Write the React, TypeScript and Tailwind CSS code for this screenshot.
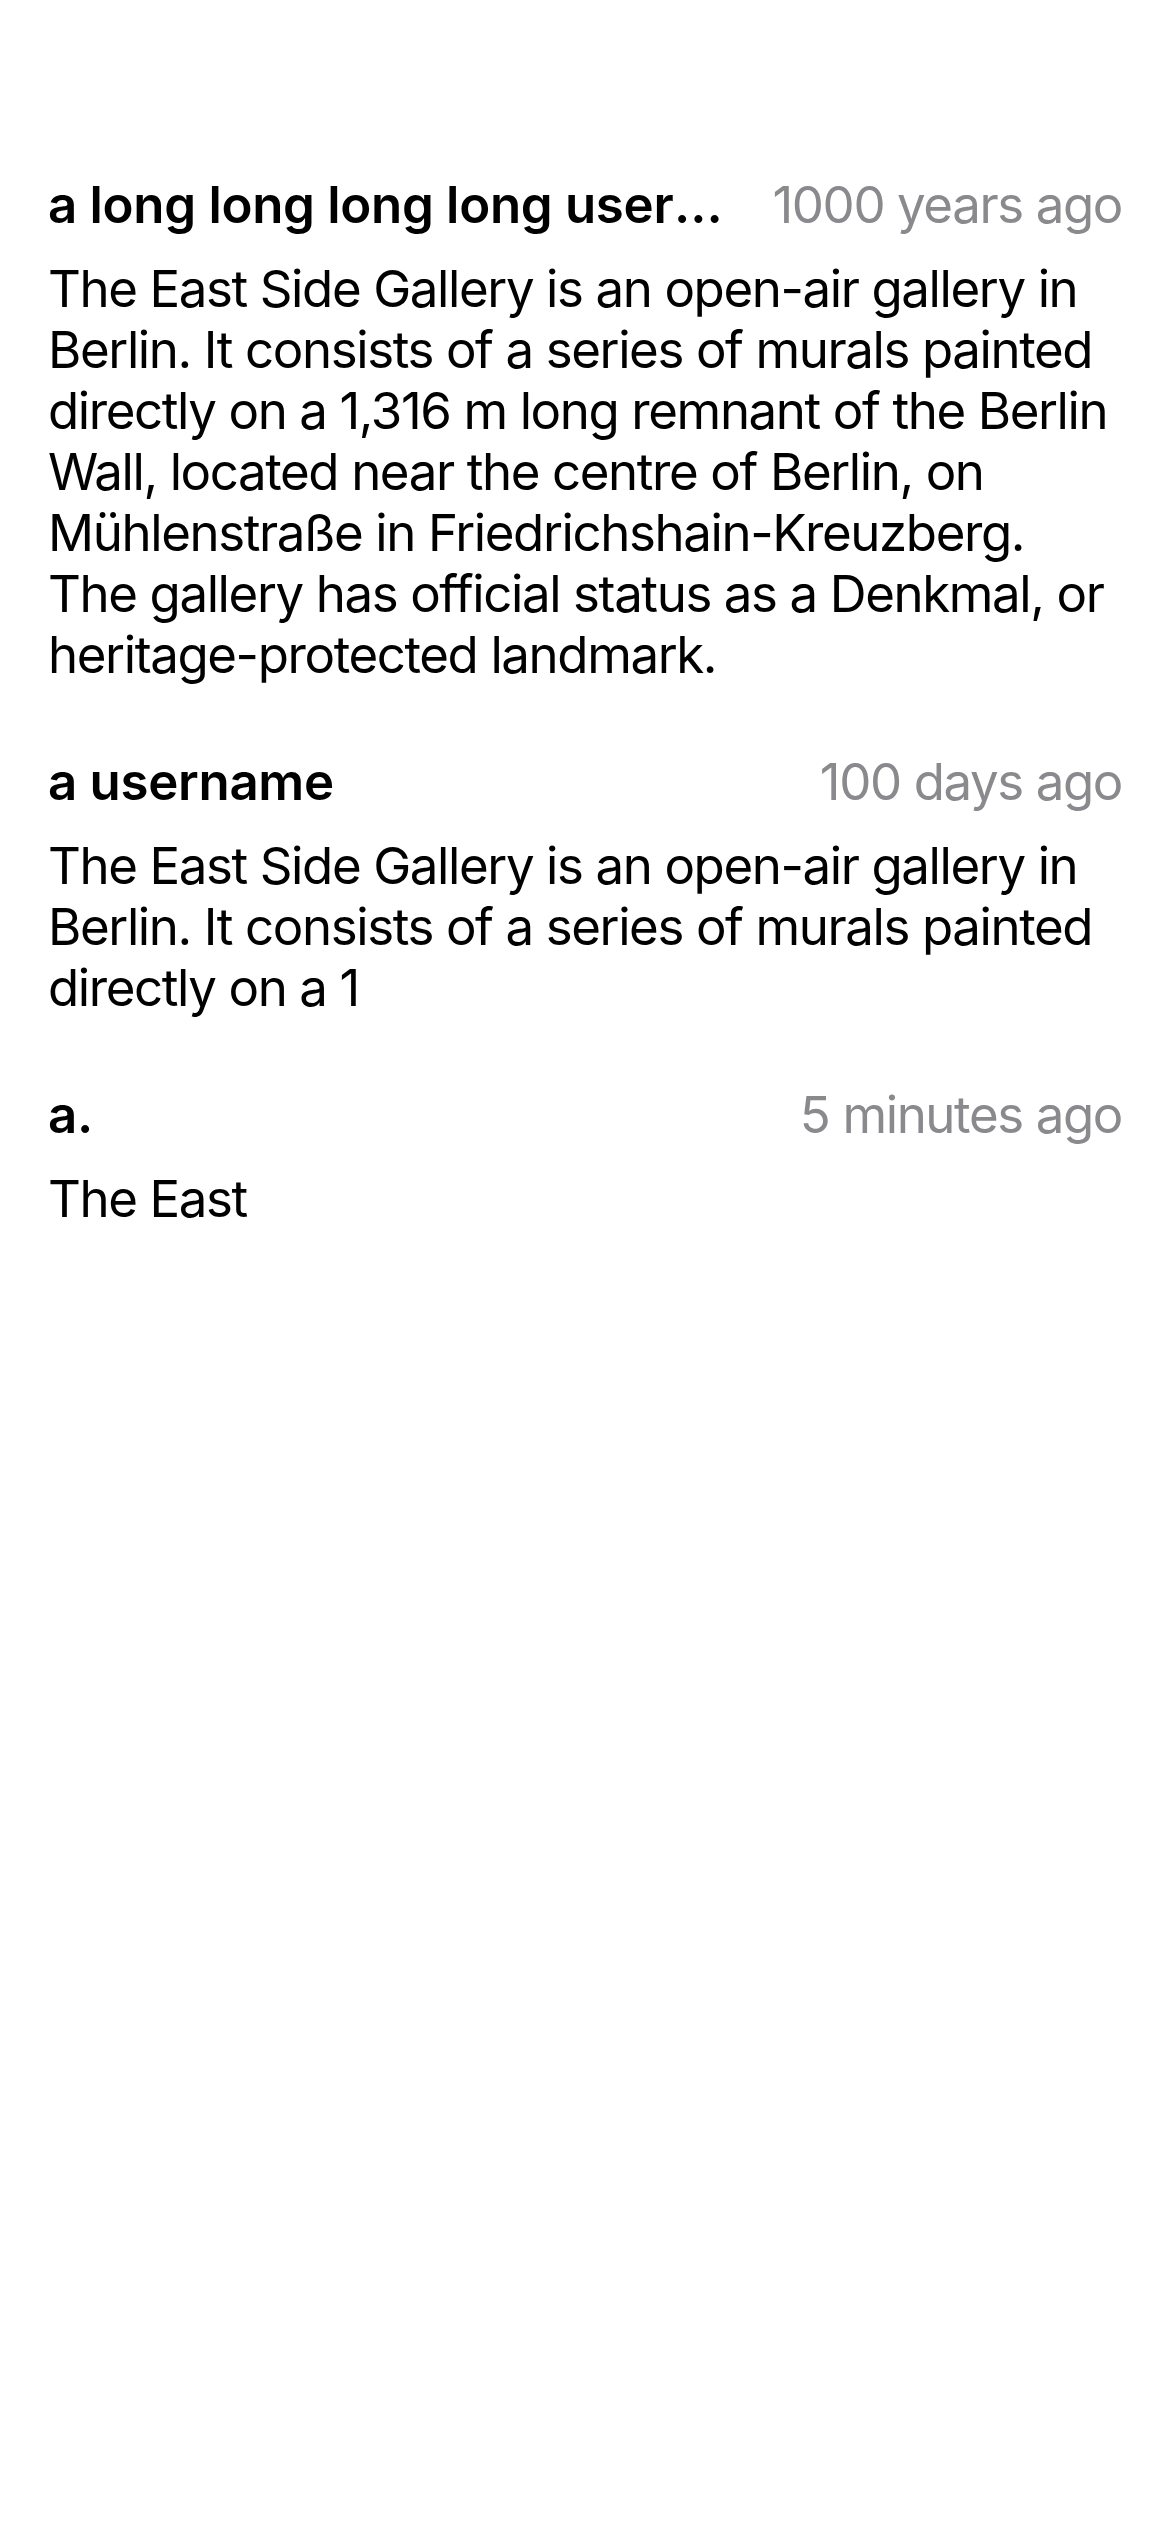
import React from "react";

const TEXT =
  "The East Side Gallery is an open-air gallery in Berlin. It consists of a series of murals painted directly on a 1,316 m long remnant of the Berlin Wall, located near the centre of Berlin, on Mühlenstraße in Friedrichshain-Kreuzberg. The gallery has official status as a Denkmal, or heritage-protected landmark.";

const comments = [
  { user: "a long long long long username here", time: "1000 years ago", body: TEXT },
  { user: "a username", time: "100 days ago", body: "The East Side Gallery is an open-air gallery in Berlin. It consists of a series of murals painted directly on a 1" },
  { user: "a.", time: "5 minutes ago", body: "The East" },
];

const Comment = ({ user, time, body }: { user: string; time: string; body: string }) => (
  <div className="flex flex-col gap-[23px]">
    <div className="flex items-center gap-[40px] leading-[61px]">
      <span className="flex-1 min-w-0 truncate font-semibold tracking-[-0.3px] text-black">{user}</span>
      <span className="shrink-0 text-[#8a8a8e]">{time}</span>
    </div>
    <p className="leading-[61px] text-black">{body}</p>
  </div>
);

export default function App() {
  return (
    <div
      className="min-h-screen bg-white px-12 pt-[174px] flex flex-col gap-[66px] text-[51px] tracking-[-1.4px]"
      style={{ fontFamily: "Inter, 'Noto Sans', sans-serif" }}
    >
      {comments.map((c) => (
        <Comment key={c.time} {...c} />
      ))}
    </div>
  );
}
